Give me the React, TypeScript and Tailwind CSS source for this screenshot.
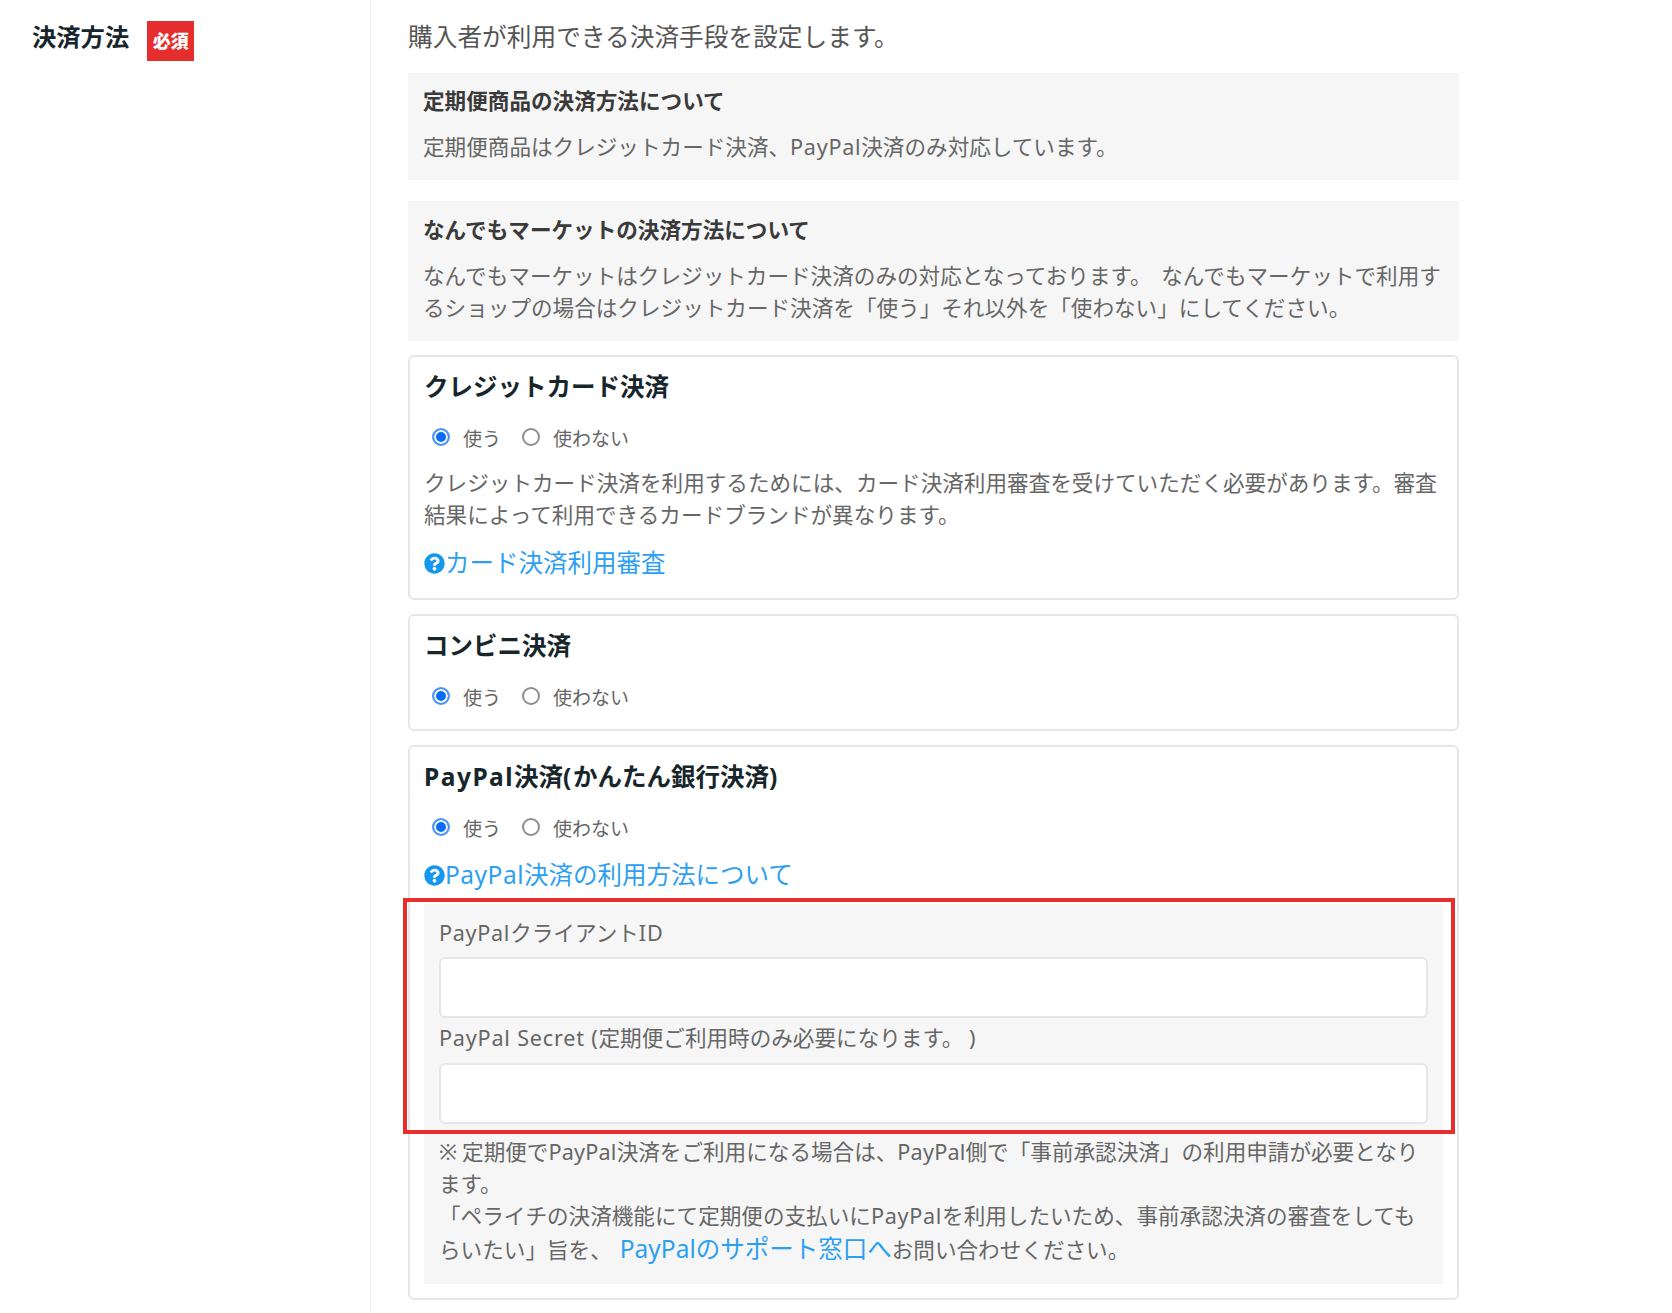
import { FaQuestionCircle } from 'react-icons/fa'

const FONT = "font-['Noto_Sans','Noto_Sans_CJK_JP',sans-serif]"

function Radios({ name }: { name: string }) {
  return (
    <div className="mt-[16px] flex h-[34px] items-center pl-[8px] text-[19px] text-[#666]">
      <input
        type="radio"
        name={name}
        defaultChecked
        className="h-[18px] w-[18px] -translate-y-[1px] appearance-none rounded-full border-2 border-[#8e8e8e] bg-white checked:border-[#4d97fb] checked:bg-[#0a6df5] checked:shadow-[inset_0_0_0_2px_#fff]"
      />
      <span className="ml-[13px] w-[59px] pt-[2px]">使う</span>
      <input
        type="radio"
        name={name}
        className="h-[18px] w-[18px] -translate-y-[1px] appearance-none rounded-full border-2 border-[#8e8e8e] bg-white checked:border-[#4d97fb] checked:bg-[#0a6df5] checked:shadow-[inset_0_0_0_2px_#fff]"
      />
      <span className="ml-[13px] pt-[2px]">使わない</span>
    </div>
  )
}

function HelpLink({ children }: { children: React.ReactNode }) {
  return (
    <a href="#" className="flex h-[36px] items-center text-[24.5px] text-[#2d9ff2]">
      <FaQuestionCircle className="h-[21px] w-[21px] shrink-0 text-[#1597ee]" />
      <span>{children}</span>
    </a>
  )
}

function Card({ title, name, children }: { title: React.ReactNode; name: string; children?: React.ReactNode }) {
  return (
    <section className="rounded-[6px] border-2 border-[#e6e6e6] bg-white px-[14px] pt-[12px] pb-[15px]">
      <h3 className="h-[36px] text-[24.5px] leading-[36px] font-bold text-[#17262b]">{title}</h3>
      <Radios name={name} />
      {children}
    </section>
  )
}

export default function App() {
  return (
    <div className={`flex min-h-[1313px] w-[1672px] overflow-hidden bg-white ${FONT}`}>
      {/* left label */}
      <div className="flex w-[371px] shrink-0 items-start border-r border-[#eeeeee] pt-[21px] pl-[32px]">
        <span className="text-[24.3px] leading-[32px] font-bold text-[#17262b]">決済方法</span>
        <span className="ml-[18px] flex h-[40px] w-[47px] items-center justify-center bg-[#e62e2e] text-[18px] font-black text-white">
          必須
        </span>
      </div>

      {/* right column */}
      <div className="ml-[37px] w-[1051px] pt-[21px]">
        <p className="text-[24.7px] leading-[32px] text-[#555]">購入者が利用できる決済手段を設定します。</p>

        <div className="mt-[20px] bg-[#f6f6f6] px-[15px] pt-[12px] pb-[17px]">
          <h4 className="text-[21.6px] leading-[32px] font-bold text-[#3a3a3a]">定期便商品の決済方法について</h4>
          <p className="mt-[14px] text-[21.6px] leading-[32px] text-[#666]">
            定期便商品はクレジットカード決済、<span className="tracking-[0.7px]">PayPal</span>決済のみ対応しています。
          </p>
        </div>

        <div className="mt-[21px] bg-[#f6f6f6] px-[15px] pt-[13px] pb-[17px]">
          <h4 className="text-[21.6px] leading-[32px] font-bold text-[#3a3a3a]">なんでもマーケットの決済方法について</h4>
          <p className="mt-[14px] text-[21.6px] leading-[32px] text-[#666]">
            なんでもマーケットはクレジットカード決済のみの対応となっております。 <span className="ml-[4px]">なんでもマーケットで利用するショップの場合はクレジットカード決済を「使う」それ以外を「使わない」にしてください。</span>
          </p>
        </div>

        <div className="mt-[14px] flex flex-col gap-[14px]">
          <Card title="クレジットカード決済" name="credit">
            <p className="mt-[12px] text-[21.6px] leading-[32px] text-[#666]">
              クレジットカード決済を利用するためには、カード決済利用審査を受けていただく必要があります。審査結果によって利用できるカードブランドが異なります。
            </p>
            <div className="mt-[14px] mb-[2px]">
              <HelpLink>カード決済利用審査</HelpLink>
            </div>
          </Card>

          <Card title="コンビニ決済" name="konbini" />

          <Card
            title={
              <>
                <span className="tracking-[1.5px]">PayPal</span>決済<span className="tracking-[1.5px]">(</span>かんたん銀行決済<span className="tracking-[1.5px]">)</span>
              </>
            }
            name="paypal"
          >
            <div className="mt-[12px]">
              <HelpLink>
                <span className="tracking-[0.5px]">PayPal</span>決済の利用方法について
              </HelpLink>
            </div>

            <div className="relative mt-[11px] mb-[-1px] bg-[#f6f6f6] px-[15px] pt-[13px] pb-[18px]">
              <label className="block text-[21.6px] leading-[32px] text-[#666]">
                <span className="tracking-[0.7px]">PayPal</span>クライアント<span className="tracking-[0.7px]">ID</span>
              </label>
              <input type="text" className="mt-[8px] block h-[61px] w-full rounded-[6px] border-2 border-[#e6e6e6] bg-white" />
              <label className="mt-[4px] block text-[21.6px] leading-[32px] text-[#666]">
                <span className="tracking-[0.8px]">PayPal Secret (</span>定期便ご利用時のみ必要になります。 )
              </label>
              <input type="text" className="mt-[9px] block h-[61px] w-full rounded-[6px] border-2 border-[#e6e6e6] bg-white" />

              <p className="mt-[12px] text-[21.6px] leading-[32px] text-[#666]">
                <span className="mr-[5px]">※</span>定期便で<span className="tracking-[0.2px]">PayPal</span>決済をご利用になる場合は、<span className="tracking-[0.2px]">PayPal</span>側で「事前承認決済」の利用申請が必要となります。
                <br />
                「ペライチの決済機能にて定期便の支払いに<span className="tracking-[0.7px]">PayPal</span>を利用したいため、事前承認決済の審査をしてもらいたい」旨を、
                <a href="#" className="ml-[8px] text-[24.5px] leading-[34px] text-[#2d9ff2]">
                  PayPalのサポート窓口へ
                </a>
                お問い合わせください。
              </p>

              {/* red highlight drawn over the screenshot */}
              <div className="pointer-events-none absolute -top-[6px] -left-[21px] h-[236px] w-[1052px] border-4 border-[#e62e2e]" />
            </div>
          </Card>
        </div>
      </div>
    </div>
  )
}
